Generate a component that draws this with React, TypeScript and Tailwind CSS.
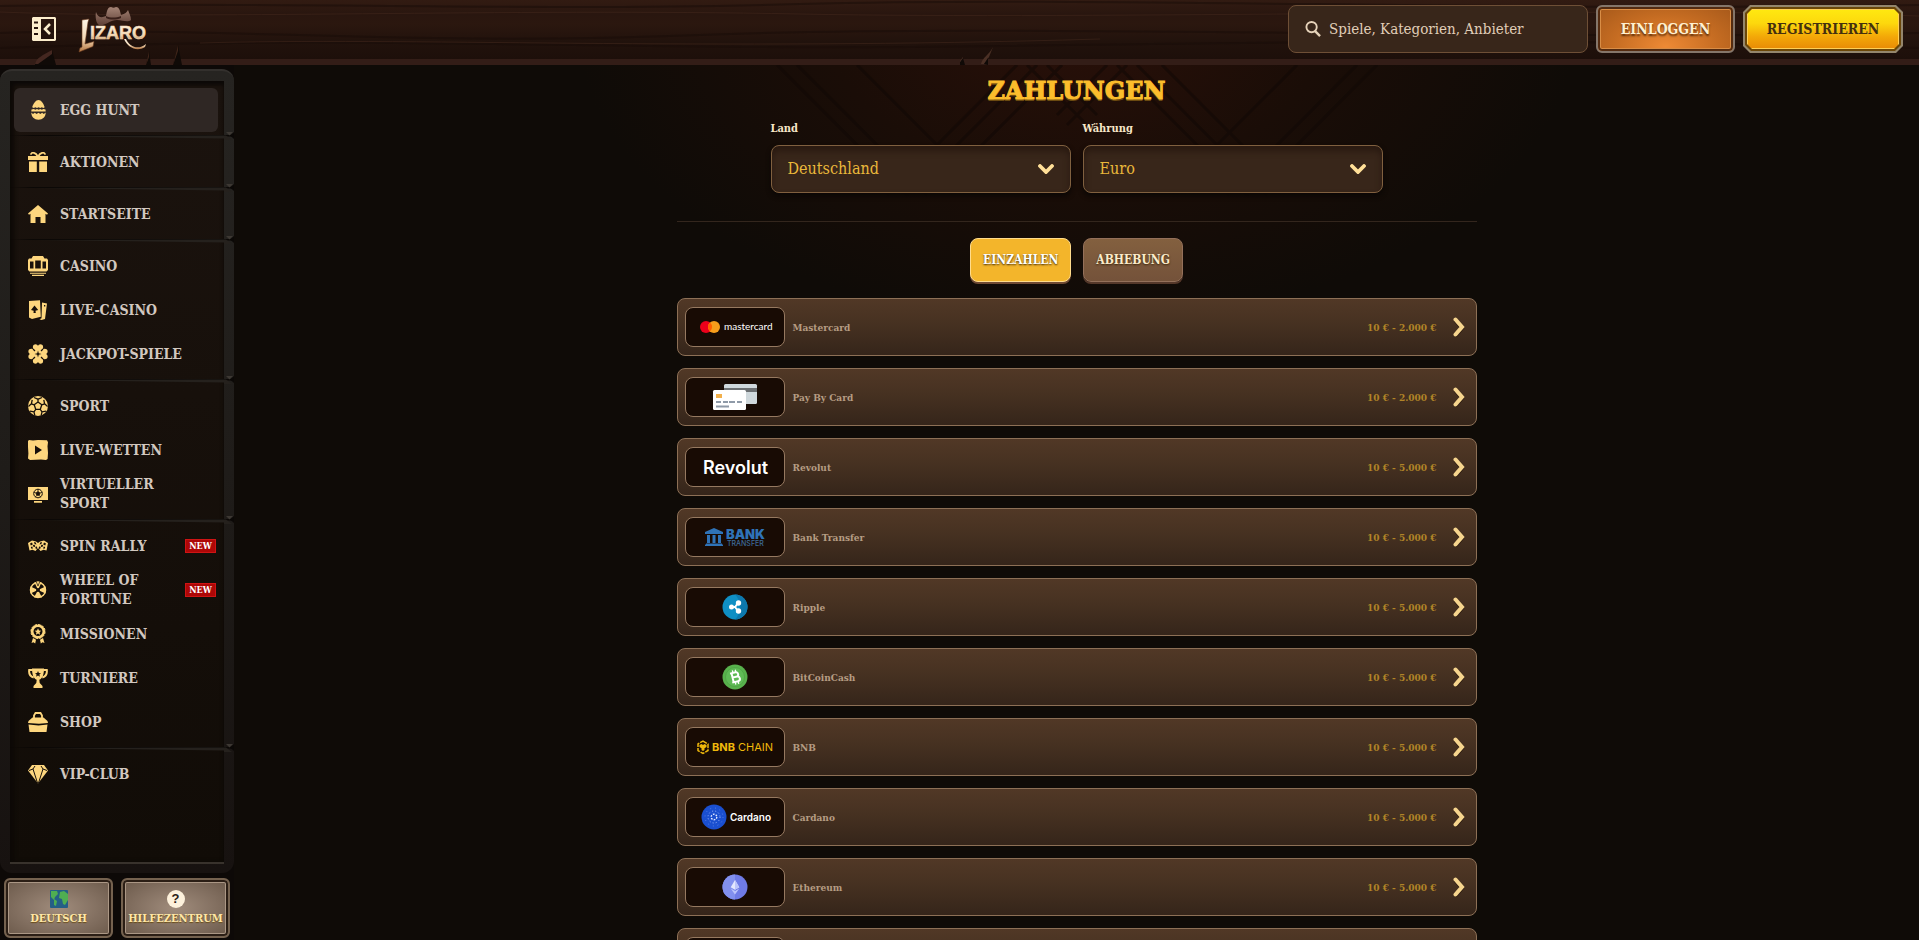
import React from 'react';

interface MenuItem {
  label: string;
  icon: React.ReactNode;
  isNew?: boolean;
  active?: boolean;
}

interface PaymentMethod {
  name: string;
  range: string;
  logo: React.ReactNode;
}

const MENU_GROUPS: MenuItem[][] = [
  [
    {
      label: 'EGG HUNT',
      active: true,
      icon: (
        <>
          <path d="M10.500 0c-2.600 0-5.100 3.600-6.300 7.200l1.600.8 1.600-.8 1.600.8 1.600-.8 1.600.8 1.600-.8 1.600.8 1.300-.7C15.600 3.600 13.100 0 10.500 0z" />
          <path d="M3.500 9.500l2.300-.6 1.600.8 1.600-.8 1.600.8 1.600-.8 1.600.8 1.600-.8 2.100.6.2 1.900H3.300z" />
          <path d="M3.300 12.500l1.700 1.500 1.800-1.200 1.800 1.200 1.900-1.200 1.800 1.200 1.800-1.200 1.700 1.200 1.900-1.500c0 4.500-3 7.200-7.200 7.200s-7.200-2.700-7.200-7.200z" />
        </>
      ),
    },
  ],
  [
    {
      label: 'AKTIONEN',
      icon: (
        <>
          <path d="M0 4h20v4H0zM1 9.500h7.800V20H1zM11.200 9.500H19V20h-7.800z" />
          <path d="M9.500 4C8 .8 3.500-.8 2.800 2.600M10.500 4C12 .8 16.500-.8 17.200 2.600" fill="none" stroke="currentColor" strokeWidth="1.800" />
        </>
      ),
    },
  ],
  [
    {
      label: 'STARTSEITE',
      icon: <path d="M10 1l10 8.500-1 1.200-1.500-.9V19h-5v-6h-5v6h-5V9.800l-1.500.9-1-1.200z" />,
    },
  ],
  [
    {
      label: 'CASINO',
      icon: (
        <>
          <path fillRule="evenodd" d="M5 0h10l1.500 2.500H19L20 4v10l-1.500 1.500h-17L0 14V4l1-1.500h2.500zM2 5.500v7h3.500v-7zM7.200 4.500v8h5.600v-8zM14.500 5.500v7H18v-7z" />
          <path d="M2 16.800h16v1H2zM4 18.800h12V20H4z" />
        </>
      ),
    },
    {
      label: 'LIVE-CASINO',
      icon: (
        <>
          <path fillRule="evenodd" d="M1 1l11-.8.8 16.500L4 19 1 17.500zM6.500 5.500L3 10l2.700.8L5.500 13h2.300l-.3-2.200 2.700-.8z" />
          <path fillRule="evenodd" d="M14 2.500l5 1-2 15.500-3.500 1-2-.8 2-1zm2 2.500v1.500h1.300V5z" />
        </>
      ),
    },
    {
      label: 'JACKPOT-SPIELE',
      icon: (
        <>
          <path d="M9.500 9.500C5 7 4 3.500 5.500 1 8-.5 9.500 1 10 2c.5-1 2-2.500 4.500-1C16 3.500 15 7 10.500 9.500z" />
          <path d="M9.500 10.500C5 13 4 16.500 5.500 19c2.500 1.500 4 0 4.500-1 .5 1 2 2.500 4.500 1 1.500-2.500.5-6-4-8.500z" />
          <path d="M9.500 9.500C7 5 3.500 4 1 5.500-.5 8 1 9.500 2 10c-1 .5-2.500 2-1 4.500 2.500 1.500 6 .5 8.500-4zM10.500 9.500C13 5 16.500 4 19 5.500c1.500 2.500 0 4-1 4.500 1 .5 2.500 2 1 4.500-2.500 1.500-6 .5-8.500-4z" />
          <path d="M10 6.500l.8 2.700 2.700.8-2.700.8-.8 2.700-.8-2.700-2.700-.8 2.700-.8z" fill="#17100b" />
          <path d="M5 5l2 2M15 5l-2 2M5 15l2-2M15 15l-2-2" stroke="#17100b" strokeWidth="1.200" />
        </>
      ),
    },
  ],
  [
    {
      label: 'SPORT',
      icon: (
        <>
          <circle cx="10" cy="10" r="10" />
          <path
            d="M10 6l3.800 2.800-1.500 4.500H7.700L6.200 8.800zM10 6V3.200M13.800 8.800l2.800-1M12.300 13.300l1.700 2.500M7.700 13.300L6 15.800M6.200 8.800l-2.800-1M6 1.500l4 1.700 4-1.700M16.600 7.800l-.8-4M16.600 7.800l3 2.700M14 15.800l4-.6M14 15.800l-.8 3.500M6 15.800l-4-.6M6 15.800l.8 3.500M3.400 7.800l.8-4M3.400 7.800l-3 2.700"
            fill="none"
            stroke="#17100b"
            strokeWidth="1.300"
          />
        </>
      ),
    },
    {
      label: 'LIVE-WETTEN',
      icon: <path fillRule="evenodd" d="M0 1l1-1 4 .5L10 0l9 .3 1 2-.5 4L20 13l-.4 6-1.600 1-5-.4L2 20l-2-1.500.4-5L0 7zM7 5.500v9l7-4.500z" />,
    },
    {
      label: 'VIRTUELLER SPORT',
      icon: (
        <>
          <path d="M0 3h20v13H0zM6 17h8v1.800H6z" />
          <circle cx="10" cy="9.500" r="4.300" fill="none" stroke="#17100b" />
          <path d="M10 7.500l2 1.500-.8 2.300H8.800L8 9zM10 7.500V5.200M12 9l2-.8M11.200 11.300l1.500 1.900M8.800 11.300l-1.500 1.900M8 9l-2-.8" stroke="#17100b" strokeWidth=".8" fill="#17100b" />
        </>
      ),
    },
  ],
  [
    {
      label: 'SPIN RALLY',
      isNew: true,
      icon: (
        <>
          <path d="M0 7l4-2.500 4 1 2 1.500 2-1.500 4-1L20 7l-1.500 7.500-3-.7-3 1.200L10 12l-2.500 3-3-1.200-3 .7z" />
          <path
            d="M2 7.500l2-1 .8 2-2 1zM6 6l1.800.6.6 1.800-1.800-.3zM4.800 9l1.800-.3.8 2-1.800.3zM2.800 11l1.500-.6.6 2-1.500.3zM7.200 11.500l1.500-1.200.6 1.700-1.200 1.300zM18 7.500l-2-1-.8 2 2 1zM14 6l-1.800.6-.6 1.800 1.800-.3zM15.200 9l-1.800-.3-.8 2 1.800.3zM17.200 11l-1.500-.6-.6 2 1.500.3zM12.800 11.500l-1.500-1.200-.6 1.700 1.200 1.300z"
            fill="#17100b"
          />
        </>
      ),
    },
    {
      label: 'WHEEL OF FORTUNE',
      isNew: true,
      icon: (
        <>
          <circle cx="10" cy="10" r="7.500" fill="none" stroke="currentColor" strokeWidth="1.500" />
          <path d="M10 10L6.500 2.500h7zM10 10L6 17.500h8zM10 10L2.500 6.500v7zM10 10l7.500-3.500v7z" />
          <circle cx="10" cy="10" r="2" fill="#17100b" />
          <path d="M8 1h4l-2 5z" stroke="#17100b" strokeWidth=".7" />
        </>
      ),
    },
    {
      label: 'MISSIONEN',
      icon: (
        <>
          <circle cx="10" cy="7.500" r="5.800" fill="none" stroke="currentColor" strokeWidth="2.600" />
          <circle cx="10" cy="7.500" r="7.100" fill="none" stroke="currentColor" strokeWidth="1" strokeDasharray="2.500 1.200" />
          <path d="M10 4.300l1 2.200 2.300.2-1.800 1.600.6 2.400-2.100-1.300-2.100 1.300.6-2.400-1.800-1.600L9 6.500zM5 14l3 1.800-.8 3.700-1.700-1.200-2 .7zM15 14l-3 1.800.8 3.700 1.700-1.200 2 .7z" />
        </>
      ),
    },
    {
      label: 'TURNIERE',
      icon: (
        <>
          <path d="M4 .5h12c0 6-1.500 10-4.700 11.300l.4 3.200 2.800 3V20h-9v-2l2.800-3 .4-3.200C5.500 10.500 4 6.500 4 .5z" />
          <path d="M4.500 2H1.200c-.5 4 1 6.500 4.500 7.500M15.500 2h3.300c.5 4-1 6.500-4.500 7.500" fill="none" stroke="currentColor" strokeWidth="2" />
          <path d="M10 3l.9 2 2.100.2-1.600 1.400.5 2.200L10 7.600 8.100 8.800l.5-2.200L7 5.200 9.100 5z" fill="#17100b" />
        </>
      ),
    },
    {
      label: 'SHOP',
      icon: (
        <>
          <path d="M6 7V3.500L7.500 1h5L14 3.500V7" fill="none" stroke="currentColor" strokeWidth="1.800" />
          <path d="M4.500 5.500h11L19.500 9l.5 2-9 .8L0 11l.5-2zM.5 12.500l10 1 9-1L18.500 20h-17z" />
        </>
      ),
    },
  ],
  [
    {
      label: 'VIP-CLUB',
      icon: (
        <>
          <path d="M4 1h12l4 5.500L10 19.500 0 6.500z" />
          <path d="M1 6.500L5 5l2-3M19 6.500L15 5l-2-3M5 5l4.500 14M15 5l-4.500 14" stroke="#17100b" strokeWidth="1" fill="none" />
        </>
      ),
    },
  ],
];

const PAYMENT_METHODS: PaymentMethod[] = [
  {
    name: 'Mastercard',
    range: '10 € - 2.000 €',
    logo: (
      <>
        <circle cx="20" cy="19" r="6" fill="#eb001b" />
        <circle cx="28" cy="19" r="6" fill="#f79e1b" />
        <path d="M24 14.500a6 6 0 010 9 6 6 0 010-9z" fill="#ff5f00" />
        <text x="38" y="22" fontSize="10" fill="#fff" className="font-['Lato'] font-normal">mastercard</text>
      </>
    ),
  },
  {
    name: 'Pay By Card',
    range: '10 € - 2.000 €',
    logo: (
      <>
        <rect x="38" y="6" width="33" height="20" rx="1.500" fill="#cfd8dc" />
        <rect x="38" y="10" width="33" height="4" fill="#6b6f72" />
        <rect x="27" y="12" width="33" height="20" rx="1.500" fill="#fff" />
        <rect x="30" y="16" width="6" height="4" fill="#f2b04b" />
        <path d="M30 24h5M37 24h5M43 24h6M51 24h5M30 28.500h13" stroke="#8f9aa8" strokeWidth="2" />
      </>
    ),
  },
  {
    name: 'Revolut',
    range: '10 € - 5.000 €',
    logo: <text x="17" y="26" fontSize="18" fill="#fff" className="font-['Inter'] font-semibold">Revolut</text>,
  },
  {
    name: 'Bank Transfer',
    range: '10 € - 5.000 €',
    logo: (
      <>
        <path d="M28 10l9 4v2H19v-2zM21 17h3v8h-3zM26.500 17h3v8h-3zM32 17h3v8h-3zM20 25.500h16v1H20zM19 26.500h18V28H19z" fill="#2f73b7" />
        <text x="40" y="21" fontSize="13" fill="#2f73b7" className="font-['Inter'] font-black">BANK</text>
        <text x="41" y="28" fontSize="7" fill="#3d6a98" className="font-['Inter'] font-medium">TRANSFER</text>
      </>
    ),
  },
  {
    name: 'Ripple',
    range: '10 € - 5.000 €',
    logo: (
      <>
        <circle cx="49" cy="19" r="12.500" fill="#0f8fc4" />
        <path d="M49 6.500a12.500 12.500 0 010 25c6-5 6-20 0-25z" fill="#0d78ad" />
        <path d="M45.500 19h3.500l3-4M49 19l3 4" stroke="#fff" strokeWidth="2" fill="none" />
        <circle cx="45.500" cy="19" r="2.500" fill="#fff" />
        <circle cx="52.500" cy="15" r="2.700" fill="#fff" />
        <circle cx="52.500" cy="23" r="2.700" fill="#fff" />
      </>
    ),
  },
  {
    name: 'BitCoinCash',
    range: '10 € - 5.000 €',
    logo: (
      <>
        <circle cx="49" cy="19" r="12.500" fill="#58b14c" />
        <circle cx="49" cy="19" r="9.500" fill="#5fba55" stroke="#4a9c40" strokeWidth=".6" />
        <g transform="rotate(-14 49 19)" fill="none" stroke="#fff" strokeWidth="2">
          <path d="M45 14.500h5.500a2 2 0 010 4.500h-4M46.500 19h4.500a2.200 2.200 0 010 4.800h-6M46.500 14.500v9.300" />
          <path d="M48 12v2.500M51 12v2.500M48 24v2.500M51 24v2.500" strokeWidth="1.300" />
        </g>
      </>
    ),
  },
  {
    name: 'BNB',
    range: '10 € - 5.000 €',
    logo: (
      <>
        <path d="M17 13l5 3v6.500l-5 3-5-3V16z" fill="none" stroke="#f0b90b" strokeWidth="1.500" strokeDasharray="4.500 1" />
        <path d="M13.500 17l2-1 1.500 1 1.500-1 2 1v2l-2 1.200V22L17 23l-1.500-1v-1.800L13.500 19z" fill="#f0b90b" />
        <text x="26" y="23" fontSize="11" fill="#f0b90b" className="font-['Inter'] font-bold">BNB</text>
        <text x="52" y="23" fontSize="11" fill="#f0b90b" className="font-['Inter'] font-normal">CHAIN</text>
      </>
    ),
  },
  {
    name: 'Cardano',
    range: '10 € - 5.000 €',
    logo: (
      <>
        <circle cx="28" cy="19" r="12.500" fill="#1a4fd0" />
        <circle cx="28" cy="19" r="2.800" fill="none" stroke="#dfe7ff" strokeWidth="1.400" strokeDasharray="1.700 1.230" />
        <circle cx="28" cy="19" r="6" fill="none" stroke="#a9c0ff" strokeWidth=".9" strokeDasharray="1 2.200" />
        <circle cx="28" cy="19" r="9" fill="none" stroke="#7c9cf5" strokeWidth=".7" strokeDasharray=".8 4" />
        <text x="44" y="23" fontSize="10" fill="#fff" className="font-['Inter'] font-semibold">Cardano</text>
      </>
    ),
  },
  {
    name: 'Ethereum',
    range: '10 € - 5.000 €',
    logo: (
      <>
        <circle cx="49" cy="19" r="12.500" fill="#6f7be6" />
        <path d="M49 6.500a12.500 12.500 0 000 25z" fill="#8290ee" />
        <path d="M49 12l4.300 7.300L49 21.800l-4.300-2.500z" fill="#e4e7fd" />
        <path d="M49 12l4.300 7.300L49 21.800zM44.700 20.500L49 23l4.300-2.500L49 26.500z" fill="#bcc4fa" />
      </>
    ),
  },
];

const Logo: React.FC = () => (
  <svg viewBox="0 0 70 48" className="w-[70px] h-12" role="img" aria-label="Lizaro">
    <defs>
      <linearGradient id="gold" x1="0" y1="0" x2="0" y2="1">
        <stop offset="0" stopColor="#fff6e6" />
        <stop offset=".6" stopColor="#f3d8b4" />
        <stop offset="1" stopColor="#b27440" />
      </linearGradient>
      <linearGradient id="hat" x1="0" y1="0" x2="0" y2="1">
        <stop offset="0" stopColor="#a58476" />
        <stop offset="1" stopColor="#5f4036" />
      </linearGradient>
    </defs>
    <path d="M4 15l7-1-1 3-3 22 9-2.500-1 5L1 47l1-4 2-1z" fill="url(#gold)" stroke="#6d3d20" strokeWidth=".6" />
    <text x="12" y="34" fontSize="18" fill="url(#gold)" stroke="#f3d8b4" strokeWidth=".5" className="font-['Liberation_Sans'] font-bold">IZARO</text>
    <path d="M48 34c3 7 12 12 20 5l-1 3c-8 5-17 1-21-8z" fill="url(#gold)" />
    <path d="M18 7c2 6 6 6 10 4 1-6 2-9 5-9 2 1 3 1 5 0 3 0 4 3 5 8 4-1 6-3 7-5 1 3 3 6 3 10-4 3-8 0-14 0-7 0-11 6-18 5-3-1-4-9-3-13z" fill="url(#hat)" />
    <path d="M28 11c4 2 10 2 15 0v2c-5 2-11 2-15 0z" fill="#3a201a" />
  </svg>
);

const Header: React.FC = () => (
  <header className="relative z-10 h-[65px] shrink-0 flex items-center pl-8 pr-4 pb-[7px] bg-[linear-gradient(180deg,#321b12_0,#29160f_14px,#2b170f_24px,#21120c_42px,#1d0f0a_59px,#331d17_59px,#331d17_100%)]">
    <svg aria-hidden="true" viewBox="0 0 1919 59" preserveAspectRatio="none" className="absolute left-0 top-0 w-full h-[59px] pointer-events-none" fill="none">
      <path d="M0 6C300 1 500 12 800 4s700 8 1119 1M0 33c200-8 400 14 700 2s800 6 1219-2M0 48c400-14 600 4 1000-2s600-6 919 2" stroke="#180c07" strokeWidth="2" opacity=".5" />
      <path d="M0 12c200 8 500-4 800 2s800-8 1119 2M200 43c200-6 500 8 900-4" stroke="#46291d" strokeWidth="1" opacity=".5" />
    </svg>
    <svg aria-hidden="true" viewBox="0 0 200 24" className="absolute left-0 bottom-0 w-[200px] h-6 pointer-events-none">
      <path d="M35 23c3-6 10-9 17-14l4 15H35z" fill="#100a07" />
      <path d="M35 23c1-6 8-9 17-14v4L38 23z" fill="#442720" />
      <path d="M146 24l3-14 2 14zM173 24l5-20 4 20z" fill="#100a07" />
      <path d="M146 24l3-14v6zM173 24l5-20v6z" fill="#3e2419" />
    </svg>
    <svg aria-hidden="true" viewBox="0 0 40 20" className="absolute left-1/2 bottom-0 w-10 h-5 pointer-events-none">
      <path d="M0 16l3-4v6l-5 2zM21 19c1-6 8-9 12-17l-4 10-5 7z" fill="#4b3025" />
      <path d="M3 13l2 7H-2zM24 19l4-6v7z" fill="#100a07" />
    </svg>

    <button type="button" aria-label="Menü" className="relative w-6 h-6">
      <svg viewBox="0 0 24 24" className="w-6 h-6 text-[#fdeecd]">
        <path fillRule="evenodd" d="M1 0h22l1 1v22l-1 1H1l-1-1V1zM9 2v20h13V2zM2 4.500v2h4v-2zM2 10v2h4v-2zM2 16v2h4v-2z" fill="currentColor" />
        <path d="M18 7l-5 5 5 5" fill="none" stroke="currentColor" strokeWidth="2.500" />
      </svg>
    </button>
    <a href="#" className="relative ml-[22px]">
      <Logo />
    </a>

    <div className="relative ml-auto flex items-center gap-2">
      <label className="w-[300px] h-12 flex items-center gap-2 px-4 rounded-lg border border-[#6e4f36] bg-[#38261a]">
        <svg viewBox="0 0 17 17" aria-hidden="true" className="w-4 h-4 shrink-0 text-[#e6d3ba]" fill="none" stroke="currentColor">
          <circle cx="7" cy="6.500" r="5.500" strokeWidth="2" />
          <path d="M10.500 10.500l5.500 5.500" strokeWidth="2.500" />
        </svg>
        <input
          type="search"
          aria-label="Suche"
          placeholder="Spiele, Kategorien, Anbieter"
          className="w-full bg-transparent outline-none text-[15px] text-[#e6d3ba] placeholder:text-[#e0ceb8]"
        />
      </label>
      <button
        type="button"
        className="w-[139px] h-12 rounded-md border-2 border-[#85766a] bg-[radial-gradient(ellipse_at_50%_90%,#ee8a35_0%,#c56c22_55%,#a5581a_100%)] shadow-[inset_0_0_0_2px_#542b10,inset_0_0_0_3px_#d98d45] text-sm font-bold text-[#fff0d0] [text-shadow:0_2px_2px_#5a2c08]"
      >
        EINLOGGEN
      </button>
      <button
        type="button"
        className="w-[160px] h-12 p-0.5 bg-[#94866c] text-sm font-bold text-[#45300e] [clip-path:polygon(7px_0,calc(100%-7px)_0,100%_7px,100%_calc(100%-7px),calc(100%-7px)_100%,7px_100%,0_calc(100%-7px),0_7px)]"
      >
        <span className="block h-full p-0.5 bg-[#6b4708] [clip-path:polygon(6px_0,calc(100%-6px)_0,100%_6px,100%_calc(100%-6px),calc(100%-6px)_100%,6px_100%,0_calc(100%-6px),0_6px)]">
          <span className="flex h-full items-center justify-center border border-[#ffcf55] bg-[linear-gradient(180deg,#ffe810_0%,#fdd80d_35%,#f3a808_70%,#e98d06_100%)] [clip-path:polygon(5px_0,calc(100%-5px)_0,100%_5px,100%_calc(100%-5px),calc(100%-5px)_100%,5px_100%,0_calc(100%-5px),0_5px)]">
            REGISTRIEREN
          </span>
        </span>
      </button>
    </div>
  </header>
);

const GroupDivider: React.FC = () => (
  <svg aria-hidden="true" viewBox="0 0 224 8" className="block h-2 w-[224px] pointer-events-none">
    <path d="M0 3h224v1.500L24 4z" fill="#0b0806" />
    <path d="M24 4l180-.5h12l6 4.500h-8v-1.500z" fill="#25211d" />
    <path d="M216 0h7l-3.500 3.500z" fill="#3d3833" />
    <path d="M224 0v7l-4-3.500z" fill="#0b0806" />
  </svg>
);

const Sidebar: React.FC = () => (
  <aside className="w-[234px] shrink-0 flex flex-col gap-[5px] pt-1 pb-0.5 bg-[#0d0907] shadow-[4px_0_16px_#080504]">
    <nav className="flex-1 rounded-xl border-t-2 border-[#33302d] bg-[linear-gradient(180deg,#262421,#1f1c19_50%,#171210)] pt-2.5 pl-2.5 pr-2.5 pb-[9px]">
      <div className="h-full border-b-2 border-[#38322c] bg-[linear-gradient(180deg,#1b130e,#17100b_40%,#110c07)] shadow-[inset_0_4px_4px_#0c0907,inset_4px_0_4px_#0e0a07] pt-[7px]">
        {MENU_GROUPS.map((group, i) => (
          <React.Fragment key={group[0].label}>
            {i > 0 && <GroupDivider />}
            <ul>
              {group.map((item) => (
                <li key={item.label} className="px-1">
                  <a
                    href="#"
                    className={
                      item.active
                        ? 'flex h-11 items-center gap-3 pl-3.5 mr-0.5 rounded-md bg-[#2f2724]'
                        : 'flex h-11 items-center gap-3 pl-3.5 pr-1'
                    }
                  >
                    <svg viewBox="0 0 20 20" aria-hidden="true" className="w-5 h-5 shrink-0 text-[#fdd67e]" fill="currentColor">
                      {item.icon}
                    </svg>
                    <span className="max-w-[130px] text-sm leading-[19px] font-bold text-[#d2c8c0]">{item.label}</span>
                    {item.isNew && (
                      <span className="ml-auto flex w-[31px] h-3.5 shrink-0 items-center justify-center border border-[#cf1414] bg-[#ad0707] text-[9px] leading-none font-bold text-white">
                        NEW
                      </span>
                    )}
                  </a>
                </li>
              ))}
            </ul>
          </React.Fragment>
        ))}
      </div>
    </nav>
    <div className="grid grid-cols-2 gap-2 pl-1 pr-1">
      <button type="button" className="flex h-[60px] flex-col items-center justify-center gap-1 rounded-md border-2 border-[#75624f] bg-[radial-gradient(ellipse_at_50%_50%,#a08c7c_0%,#806d5e_60%,#6a5849_100%)] shadow-[inset_0_0_0_2px_#2b1e15,inset_0_0_0_3px_#ab9785] text-[11px] leading-[14px] font-bold text-[#ffe7a6] [text-shadow:0_1px_1px_#6a4c18]">
        <svg viewBox="0 0 18 18" aria-hidden="true" className="w-[18px] h-[18px]">
          <rect width="18" height="18" rx="1" fill="#255f86" />
          <path d="M1 1h6l1 3-3 3-1 3-3-3zM4 9l3 2-1 5-2-1zM10 2l4-1 4 3v6l-3 5-2-1-1-5-3-1z" fill="#4fae52" />
        </svg>
        DEUTSCH
      </button>
      <button type="button" className="flex h-[60px] flex-col items-center justify-center gap-1 rounded-md border-2 border-[#75624f] bg-[radial-gradient(ellipse_at_50%_50%,#a08c7c_0%,#806d5e_60%,#6a5849_100%)] shadow-[inset_0_0_0_2px_#2b1e15,inset_0_0_0_3px_#ab9785] text-[11px] leading-[14px] font-bold text-[#ffe7a6] [text-shadow:0_1px_1px_#6a4c18]">
        <span className="flex w-[18px] h-[18px] items-center justify-center rounded-full bg-[#fdf1dc] font-['Liberation_Sans'] text-[13px] text-[#2c2018] [text-shadow:none]">?</span>
        HILFEZENTRUM
      </button>
    </div>
  </aside>
);

interface SelectFieldProps {
  id: string;
  label: string;
  options: string[];
}

const SelectField: React.FC<SelectFieldProps> = ({ id, label, options }) => (
  <div>
    <label htmlFor={id} className="block text-[11px] leading-4 font-bold text-[#f7e6c8]">{label}</label>
    <div className="relative mt-2">
      <select
        id={id}
        className="w-full h-12 appearance-none rounded-lg border border-[#80603f] bg-[#38261a] shadow-[inset_0_5px_6px_#2a1a11,0_3px_5px_#0b0705] pl-4 pr-12 text-base text-[#eab83a] outline-none"
      >
        {options.map((o) => (
          <option key={o}>{o}</option>
        ))}
      </select>
      <svg viewBox="0 0 16 10" aria-hidden="true" className="absolute right-[17px] top-[19px] w-4 h-2.5 pointer-events-none">
        <path d="M2 2l6 6 6-6" fill="none" stroke="#ffdf98" strokeWidth="3.800" strokeLinecap="round" />
      </svg>
    </div>
  </div>
);

const PaymentRow: React.FC<{ method?: PaymentMethod }> = ({ method }) => (
  <button
    type="button"
    className="flex w-full h-[58px] shrink-0 items-center rounded-lg border border-[#8d7056] bg-[linear-gradient(180deg,#513826_0%,#463121_45%,#35251a_100%)] pl-[7px] pr-[11px] text-[10px] font-bold"
  >
    <svg viewBox="0 0 98 38" aria-hidden="true" className="box-content w-[98px] h-[38px] shrink-0 rounded-lg border border-[#967960] bg-[#180b04]">
      {method?.logo}
    </svg>
    <span className="ml-2 text-[#b59c83]">{method?.name}</span>
    <span className="ml-auto text-[#b18427]">{method?.range}</span>
    <svg viewBox="0 0 12 20" aria-hidden="true" className="ml-4 w-3 h-5">
      <path d="M3 3l6 7-6 7" fill="none" stroke="#2a190c" strokeWidth="4" strokeLinecap="round" transform="translate(0 1)" />
      <path d="M2.500 2.500l6.500 7.500-6.500 7.500" fill="none" stroke="#f6d58e" strokeWidth="4" strokeLinecap="round" />
    </svg>
  </button>
);

const Payments: React.FC = () => (
  <main className="relative flex-1 overflow-y-auto [scrollbar-width:none] bg-[radial-gradient(ellipse_500px_300px_at_50%_-40px,#2a1009_0%,#1a0d07_50%,#0f0b07_100%)]">
    <svg aria-hidden="true" viewBox="0 0 800 160" className="absolute left-1/2 top-0 w-[800px] h-40 -translate-x-1/2 pointer-events-none" fill="none" stroke="#120906" strokeWidth="3" opacity=".6">
      <path d="M100 0l130 130M120 0l130 130M180 0l110 110M340 0L210 130M360 0L230 130M385 0L270 115M350 0l60 60M370 0l50 50M450 0l-60 60M430 0l-50 50M440 0l130 130M460 0l130 130M485 0l90 90M620 0L510 110M680 0L550 130M700 0L570 130" />
    </svg>
    <div className="relative w-full max-w-[800px] mx-auto flex flex-col pt-2.5">
      <h1 className="text-center text-2xl leading-8 font-extrabold font-['DejaVu_Serif'] text-[#fcbd2c] [-webkit-text-stroke:1px_#fcbd2c] [text-shadow:0_2px_0_#6b4a10]">ZAHLUNGEN</h1>
      <div className="w-full max-w-[612px] mx-auto mt-3.5 grid grid-cols-2 gap-3">
        <SelectField id="land" label="Land" options={['Deutschland']} />
        <SelectField id="waehrung" label="Währung" options={['Euro']} />
      </div>
      <hr className="mt-7 border-[#33261d]" />
      <div className="mt-4 flex justify-center gap-3">
        <button
          type="button"
          className="h-11 px-3 rounded-lg border border-[#ffdc8c] bg-[#f3b52b] shadow-[0_2px_0_#6f4a34] text-xs font-bold text-white [text-shadow:0_1px_2px_#3a2508]"
        >
          EINZAHLEN
        </button>
        <button
          type="button"
          className="h-11 px-3 rounded-lg border border-[#94705a] bg-[linear-gradient(180deg,#83603f,#74523a)] shadow-[0_2px_0_#55382a] text-xs font-bold text-[#fbeccb] [text-shadow:0_1px_2px_#3a2508]"
        >
          ABHEBUNG
        </button>
      </div>
      <div className="mt-4 flex flex-col gap-3">
        {PAYMENT_METHODS.map((m) => (
          <PaymentRow key={m.name} method={m} />
        ))}
        <PaymentRow />
      </div>
    </div>
  </main>
);

export default function App() {
  return (
    <div className="h-screen flex flex-col overflow-hidden bg-[#0f0b07] font-['DejaVu_Serif_Condensed','DejaVu_Serif',serif]">
      <Header />
      <div className="flex flex-1 min-h-0">
        <Sidebar />
        <Payments />
      </div>
    </div>
  );
}
